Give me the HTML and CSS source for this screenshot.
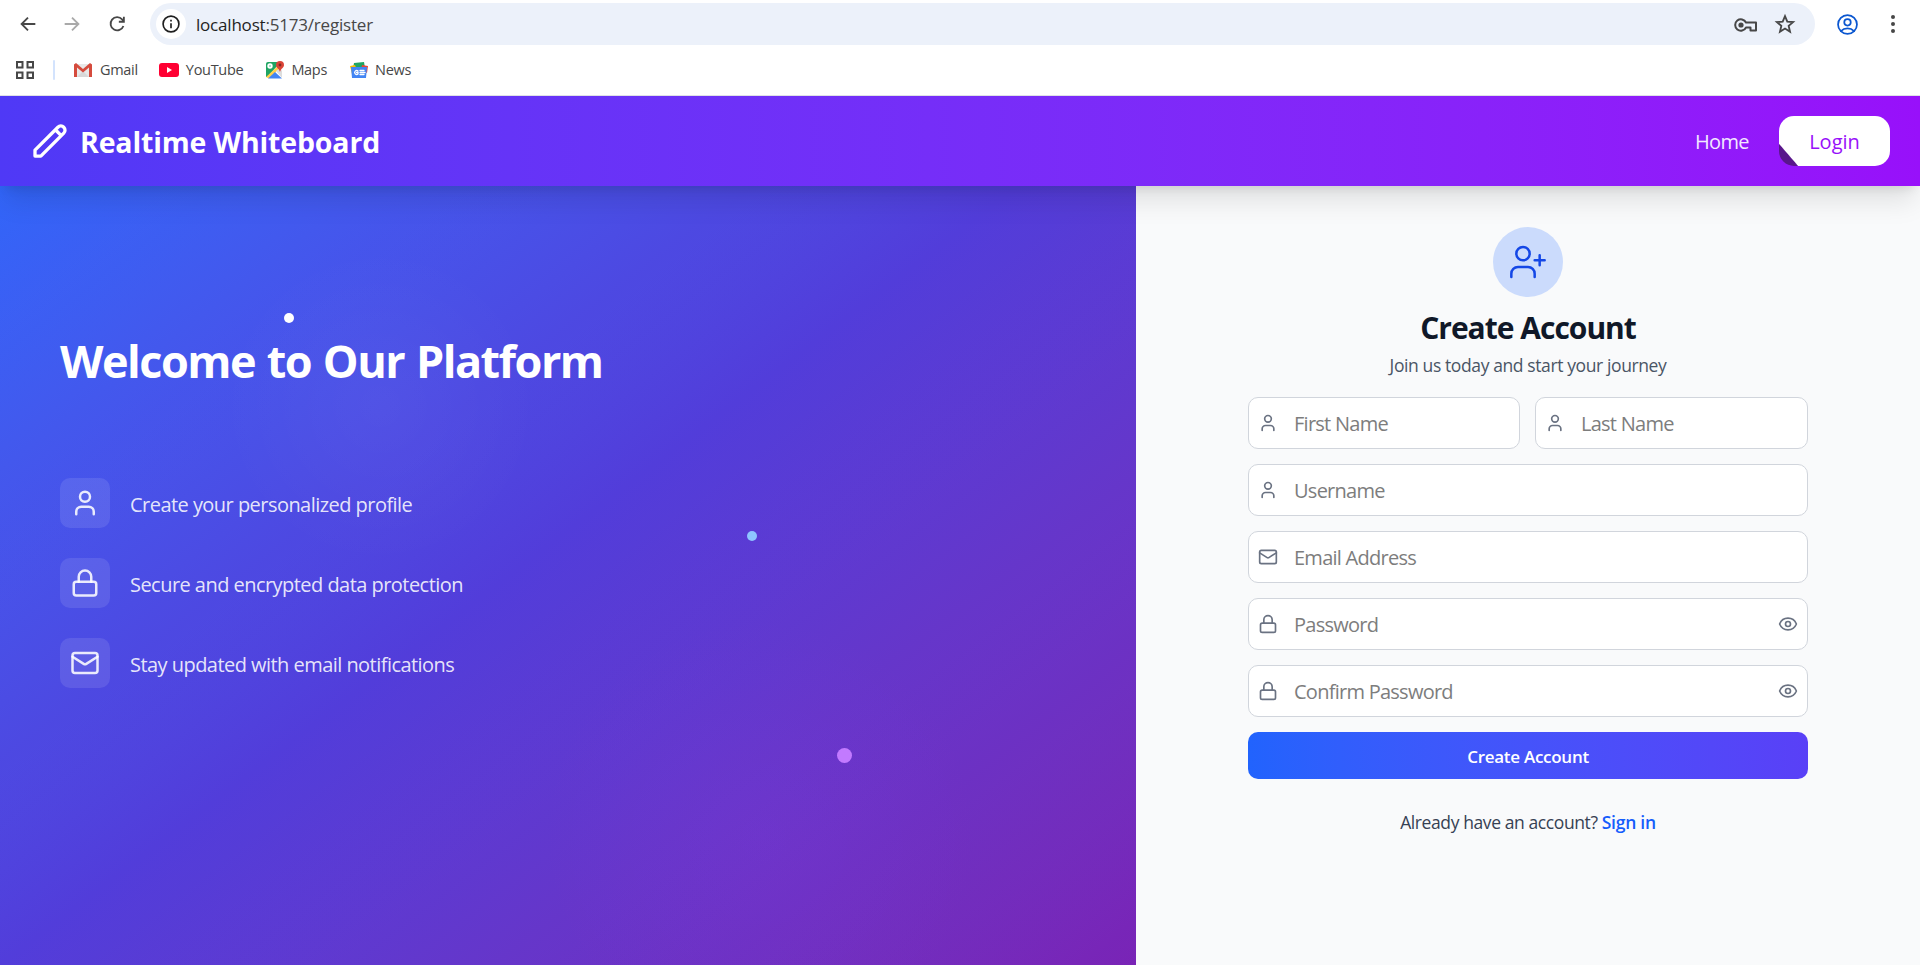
FILE: index.html
```html
<!DOCTYPE html>
<html lang="en">
<head>
<meta charset="utf-8">
<title>Realtime Whiteboard</title>
<link rel="stylesheet" href="styles.css">
</head>
<body>
<svg class="defs" aria-hidden="true">
  <symbol id="user" viewBox="0 0 24 24"><path d="M19 21v-2a4 4 0 0 0-4-4H9a4 4 0 0 0-4 4v2"/><circle cx="12" cy="7" r="4"/></symbol>
  <symbol id="lock" viewBox="0 0 24 24"><rect x="3" y="11" width="18" height="11" rx="2"/><path d="M7 11V7a5 5 0 0 1 10 0v4"/></symbol>
  <symbol id="mail" viewBox="0 0 24 24"><rect x="2" y="4" width="20" height="16" rx="2"/><path d="m22 7-8.97 5.7a1.94 1.94 0 0 1-2.06 0L2 7"/></symbol>
  <symbol id="eye" viewBox="0 0 24 24"><path d="M2.06 12.35a1 1 0 0 1 0-.7 10.75 10.75 0 0 1 19.88 0 1 1 0 0 1 0 .7 10.75 10.75 0 0 1-19.88 0"/><circle cx="12" cy="12" r="3"/></symbol>
</svg>

<div class="browser">
  <div class="toolbar">
    <svg class="nav back" viewBox="0 0 24 24"><path d="M20 12H5M12 5l-7 7 7 7"/></svg>
    <svg class="nav forward" viewBox="0 0 24 24"><path d="M4 12h15M12 5l7 7-7 7"/></svg>
    <svg class="nav reload" viewBox="0 0 24 24"><path d="M19 14.200a7.200 7.200 0 1 1-1.400-7.200L19.500 9M19.500 4v5.500H14"/></svg>
    <div class="omnibox">
      <span class="info"><svg viewBox="0 0 24 24"><circle cx="12" cy="12" r="9.500"/><path d="M12 11v6M12 7v2"/></svg></span>
      <span class="url">localhost<span class="path">:5173/register</span></span>
      <svg class="key" viewBox="0 0 24 14"><path d="M12 4.500A5.700 5.700 0 1 0 12 9.500h4.500v3h5.500v-8z"/><circle class="solid" cx="7" cy="7" r="2.600"/></svg>
      <svg class="star" viewBox="0 0 24 24"><path d="m12 3.500 2.500 5.900 6.400.5-4.900 4.200 1.500 6.300-5.500-3.400-5.500 3.400L8 14.100 3.100 9.900l6.400-.5z"/></svg>
    </div>
    <svg class="profile" viewBox="0 0 24 24"><circle cx="12" cy="12" r="10.800"/><circle cx="12" cy="9.500" r="3.700"/><path d="M4.500 19.500c4-4 11-4 15 0"/></svg>
    <svg class="dots" viewBox="0 0 6 22"><circle cx="3" cy="4" r="2"/><circle cx="3" cy="11" r="2"/><circle cx="3" cy="18" r="2"/></svg>
  </div>
  <div class="bookmarks">
    <svg class="apps" viewBox="0 0 18 18"><path d="M1 1h5.500v5.500H1zM11.500 1H17v5.500h-5.500zM1 11.500h5.500V17H1zM11.500 11.500H17V17h-5.500z"/></svg>
    <i class="sep"></i>
    <span class="bm gmail"><svg width="20" height="16" viewBox="0 0 20 16"><path fill="#e8e8e8" d="M1 2h18v13H1z"/><path fill="#d8d8d8" d="M4 15l6-6 6 6z"/><path fill="#d54b3d" d="M1 15V2.500L3 1l7 6 7-6 2 1.500V15h-3V5.500L10 10.500 4 5.500V15z"/></svg>Gmail</span>
    <span class="bm youtube"><svg width="20" height="14" viewBox="0 0 20 14"><rect width="20" height="14" rx="3" fill="#ff0033"/><path fill="#fff" d="M8 4v6l5-3z"/></svg>YouTube</span>
    <span class="bm maps"><svg width="18" height="18" viewBox="0 0 18 18"><path fill="#1fa463" d="M0 3a2 2 0 0 1 2-2h13L1 16H0z"/><path fill="#ffd04b" d="M0 16 13 4l2 2L3 17.500z"/><path fill="#4285f4" d="M2 17.500 9 11l7 6.500z"/><path fill="#ddd" d="M10 10l4-3 2 3v7z"/><path fill="#db4437" d="M14 0a4 4 0 0 1 4 4c0 3-3 3-4 7-1-4-4-4-4-7a4 4 0 0 1 4-4z"/><circle cx="14" cy="4" r="1.400" fill="#802a22"/><circle cx="4" cy="5" r="1.700" fill="none" stroke="#fff"/></svg>Maps</span>
    <span class="bm news"><svg width="18" height="16" viewBox="0 0 18 16"><path fill="#1fa463" d="M4 1l10-1 1 6H3z"/><path fill="#fbbc04" d="M0 4l5-1 2 5-5 4z"/><path fill="#ea4335" d="M18 4l-6-1-1 5 6 3z"/><path fill="#4285f4" d="M1 5h16l-1 11H2z"/><path fill="none" stroke="#fff" stroke-width="1.300" d="M8 9a2 2 0 1 0 0 3v-1.500H6.500M10 8.500h4M10 10.500h5M10 12.500h4"/></svg>News</span>
  </div>
</div>

<header class="site-header">
  <div class="brand">
    <svg viewBox="0 0 24 24"><path d="M15.232 5.232l3.536 3.536m-2.036-5.036a2.500 2.500 0 1 1 3.536 3.536L6.500 21.036H3v-3.572L16.732 3.732z"/></svg>
    <span>Realtime Whiteboard</span>
  </div>
  <nav class="menu"><a class="home">Home</a><a class="login">Login</a></nav>
</header>

<main class="page">
  <section class="hero">
    <i class="glow one"></i><i class="glow two"></i>
    <i class="dot white"></i><i class="dot blue"></i><i class="dot purple"></i>
    <h1>Welcome to Our Platform</h1>
    <ul class="features">
      <li><span class="tile"><svg><use href="#user"/></svg></span><span class="feature-text">Create your personalized profile</span></li>
      <li><span class="tile"><svg><use href="#lock"/></svg></span><span class="feature-text">Secure and encrypted data protection</span></li>
      <li><span class="tile"><svg><use href="#mail"/></svg></span><span class="feature-text">Stay updated with email notifications</span></li>
    </ul>
  </section>
  <section class="signup">
    <div class="avatar"><svg viewBox="0 0 24 24"><path d="M16 21v-2a4 4 0 0 0-4-4H6a4 4 0 0 0-4 4v2"/><circle cx="9" cy="7" r="4"/><path d="M19 8v6M22 11h-6"/></svg></div>
    <h2>Create Account</h2>
    <p class="lead">Join us today and start your journey</p>
    <form class="form">
      <div class="row">
        <label class="field"><svg><use href="#user"/></svg><span>First Name</span></label>
        <label class="field"><svg><use href="#user"/></svg><span>Last Name</span></label>
      </div>
      <label class="field"><svg><use href="#user"/></svg><span>Username</span></label>
      <label class="field"><svg><use href="#mail"/></svg><span>Email Address</span></label>
      <label class="field"><svg><use href="#lock"/></svg><span>Password</span><svg class="eye"><use href="#eye"/></svg></label>
      <label class="field"><svg><use href="#lock"/></svg><span>Confirm Password</span><svg class="eye"><use href="#eye"/></svg></label>
      <button type="button" class="submit"><span>Create Account</span></button>
    </form>
    <p class="signin"><span class="ask">Already have an account?</span> <a>Sign in</a></p>
  </section>
</main>
</body>
</html>
```
FILE: styles.css
```css
* { box-sizing: border-box; margin: 0; padding: 0; }
body { width: 1920px; height: 965px; overflow: hidden; background: #fff; font-family: "Open Sans", "Noto Sans", sans-serif; }
svg { display: block; flex: none; fill: none; stroke: currentColor; stroke-width: 2; stroke-linecap: round; stroke-linejoin: round; }
.defs { position: absolute; width: 0; height: 0; }
span, a, h1, h2, p { white-space: nowrap; }

.browser { height: 96px; border-bottom: 1px solid #dfe1e6; padding-top: 3px; color: #474747; }
.toolbar { height: 42px; display: flex; align-items: center; }
.nav { width: 22px; height: 22px; stroke-linecap: butt; stroke-linejoin: miter; }
.back { margin-left: 17px; }
.forward { margin-left: 22px; color: #a9a9a9; }
.reload { margin-left: 23px; }
.omnibox { width: 1665px; height: 42px; margin-left: 22px; padding: 0 19px 0 6px; border-radius: 21px; background: #ecf1fa; display: flex; align-items: center; }
.info { width: 30px; height: 30px; border-radius: 50%; background: #fff; display: grid; place-items: center; color: #1f1f1f; }
.info svg { width: 20px; height: 20px; stroke-linecap: butt; }
.url { margin-left: 10px; margin-right: auto; font-size: 17px; letter-spacing: -0.2px; color: #1f1f1f; }
.path { color: #474747; }
.key { width: 24px; height: 14px; margin-top: 1px; }
.star { width: 22px; height: 22px; margin-left: 16px; stroke-linejoin: miter; }
.solid, .dots { fill: currentColor; stroke: none; }
.profile { width: 21px; height: 21px; margin-left: 22px; color: #0b57d0; }
.dots { width: 6px; height: 22px; margin-left: 32px; }
.bookmarks { height: 49px; display: flex; align-items: center; padding-left: 16px; }
.apps { width: 18px; height: 18px; stroke-linejoin: miter; }
.sep { width: 2px; height: 20px; margin: 0 18px 0 19px; background: #d3e3fd; border-radius: 1px; }
.bm { display: flex; align-items: center; gap: 7px; font-size: 14.5px; letter-spacing: -0.3px; margin-right: 21px; }
.youtube, .maps { margin-right: 23px; }
.bm svg { stroke: none; }

.site-header { position: relative; z-index: 2; height: 90px; padding: 0 30px; display: flex; align-items: center; justify-content: space-between; color: #fff; background: linear-gradient(to right in oklab, #4f39f6, #9810fa); box-shadow: 0 20px 25px -5px rgba(0,0,0,.1), 0 8px 10px -6px rgba(0,0,0,.1); }
.brand { display: flex; align-items: center; gap: 10px; font-size: 28.5px; font-weight: 700; letter-spacing: -0.15px; }
.brand svg { width: 40px; height: 40px; }
.brand span { padding-top: 1px; }
.menu { display: flex; align-items: center; gap: 30px; font-size: 20px; font-weight: 500; }
.home { padding-top: 1px; color: #f3e8ff; letter-spacing: -0.6px; }
.login { width: 111px; height: 50px; line-height: 52px; text-align: center; border-radius: 15px; color: #9810fa; background: linear-gradient(49.2deg, #59168b 14px, #fff 15px); }

.page { display: flex; height: 869px; margin-top: -90px; }
.hero { position: relative; overflow: hidden; width: 1136px; padding: 237px 60px 0; color: #fff; background: linear-gradient(rgba(255,255,255,.08), rgba(255,255,255,.08)), linear-gradient(to bottom right in oklab, #155dfc, #432dd7, #6e11b0); }
.glow { position: absolute; border-radius: 50%; }
.glow.one { left: 220px; top: 150px; width: 320px; height: 320px; background: radial-gradient(closest-side, rgba(255,255,255,.035), rgba(255,255,255,0)); }
.glow.two { left: 540px; top: 520px; width: 440px; height: 440px; background: radial-gradient(closest-side, rgba(173,70,255,.07), rgba(173,70,255,0)); }
.dot { position: absolute; width: 10px; height: 10px; border-radius: 50%; }
.dot.white { left: 284px; top: 217px; background: #fff; }
.dot.blue { left: 747px; top: 435px; background: #8ec5ff; }
.dot.purple { left: 837px; top: 652px; width: 15px; height: 15px; background: #c27aff; }
.hero h1 { position: relative; font-size: 45px; line-height: 56px; font-weight: 700; letter-spacing: -1.5px; word-spacing: 1.5px; }
.features { position: relative; list-style: none; display: grid; gap: 30px; margin-top: 89px; }
.features li { height: 50px; display: flex; align-items: center; gap: 20px; font-size: 20px; color: rgba(255,255,255,.87); letter-spacing: -0.54px; }
.feature-text { padding-top: 2px; }
.tile { width: 50px; height: 50px; border-radius: 10px; background: rgba(255,255,255,.1); display: grid; place-items: center; }
.tile svg { width: 30px; height: 30px; }

.signup { width: 784px; padding-top: 131px; background: #f9fafb; display: flex; flex-direction: column; align-items: center; }
.avatar { width: 70px; height: 70px; border-radius: 50%; background: #cbdbfc; color: #1447e6; display: grid; place-items: center; }
.avatar svg { width: 40px; height: 40px; stroke-width: 1.5; }
.signup h2 { margin-top: 11px; font-size: 30px; line-height: 40px; font-weight: 700; letter-spacing: -1px; color: #101828; }
.lead { margin-top: 4px; font-size: 17.500px; line-height: 26px; color: #4a5565; letter-spacing: -0.39px; }
.form { width: 560px; margin-top: 19px; display: grid; gap: 15px; }
.row { display: grid; grid-template-columns: 272px 273px; gap: 15px; }
.field { height: 52px; padding: 0 9px; border: 1px solid #d1d5dc; border-radius: 10px; background: #fff; display: flex; align-items: center; font-size: 20px; color: #7d7d7d; letter-spacing: -0.74px; }
.field span { margin: 0 auto 0 16px; padding-top: 1px; }
.field svg { width: 20px; height: 20px; color: #6a7282; }
.submit { height: 47px; padding-top: 1px; border: 0; border-radius: 10px; color: #fff; font: 600 17px "Open Sans", sans-serif; letter-spacing: -0.27px; background: linear-gradient(to right in oklab, #2163fd, #5940f7); }
.signin { margin-top: 30px; font-size: 17.500px; line-height: 26px; color: #364153; letter-spacing: -0.4px; }
.signin a { color: #155dfc; font-weight: 600; letter-spacing: -0.25px; }
```
